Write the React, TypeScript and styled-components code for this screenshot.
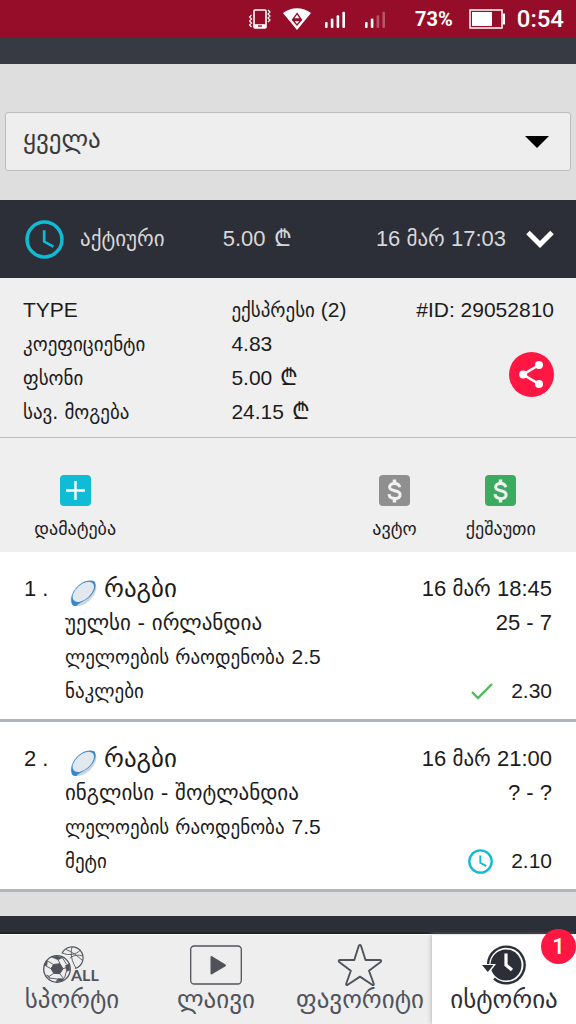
import React from "react";
import styled, { createGlobalStyle } from "styled-components";

const colors = {
  status: "#960d29",
  strip: "#373a42",
  header: "#2d2f38",
  page: "#dedede",
  panel: "#efefef",
  ink: "#1c1c1c",
  cyan: "#0fbcd6",
  green: "#3aab5f",
  grey: "#8f8f8f",
  red: "#ff1744",
  nav: "#50535b",
};

const GlobalStyle = createGlobalStyle`
  *, *::before, *::after { box-sizing: border-box; }
  body {
    margin: 0;
    background: ${colors.page};
    color: ${colors.ink};
    font-family: "Liberation Sans", "DejaVu Sans", sans-serif;
    font-size: 21px;
  }
  button, select { font: inherit; color: inherit; }
  button { border: 0; padding: 0; background: none; cursor: pointer; }
  svg { display: block; flex: none; }
`;

const Page = styled.div`
  display: flex;
  flex-direction: column;
  min-height: 100vh;
`;

const kaSizes = { small: 18, body: 19, medium: 21, lari: 23, large: 25 };

const Ka = styled.span<{ $size?: keyof typeof kaSizes }>`
  font-family: "DejaVu Sans", sans-serif;
  font-size: ${(p) => kaSizes[p.$size ?? "body"]}px;
`;

const LariSign = styled(Ka)`
  margin-left: 2px;
  line-height: 1;
`;

const StatusBar = styled.header`
  display: flex;
  align-items: center;
  justify-content: flex-end;
  height: 38px;
  padding: 0 12px;
  background: ${colors.status};
  color: #fff;
  font-family: Roboto, sans-serif;
`;

const StatusIcons = styled.div`
  display: flex;
  align-items: center;
  gap: 12px;
  margin-right: 30px;
`;

const Signals = styled.div`
  display: flex;
  gap: 20px;
  margin-left: 2px;
`;

const Percent = styled.span`
  margin-right: 16px;
  font-size: 20px;
  font-weight: 700;
`;

const Clock = styled.time`
  margin-left: 12px;
  font-size: 24px;
  font-weight: 500;
`;

const Strip = styled.div`
  height: 26px;
  background: ${colors.strip};
`;

const FilterArea = styled.div`
  padding: 48px 5px 29px;
`;

const SelectBox = styled.div`
  display: grid;
  align-items: center;
  > * { grid-area: 1 / 1; }
  > svg { justify-self: end; margin-right: 22px; pointer-events: none; }
`;

const Select = styled.select`
  appearance: none;
  width: 100%;
  height: 59px;
  padding: 0 17px 4px;
  border: 1px solid #bdbdbd;
  border-radius: 3px;
  background: #eee;
  color: #3a3a3a;
  font-family: "DejaVu Sans", sans-serif;
  font-size: 25px;
`;

const TicketHeader = styled.button`
  display: flex;
  align-items: center;
  width: 100%;
  height: 78px;
  padding: 0 22px 0 25px;
  background: ${colors.header};
  color: #d8d8d8;
  font-size: 22px;
  line-height: 34px;
  text-align: left;
`;

const TicketStatus = styled.span`
  width: 30%;
  padding-left: 16px;
`;

const TicketDate = styled.span`
  margin-left: auto;
  margin-right: 20px;
`;

const Details = styled.section`
  display: flex;
  justify-content: space-between;
  padding: 15px 22px 8px 23px;
  border-bottom: 1px solid #bcbcbc;
  background: ${colors.panel};
  line-height: 34px;
`;

const DetailList = styled.dl`
  flex: 1;
  margin: 0;
`;

const DetailRow = styled.div`
  display: flex;
  height: 34px;
`;

const DetailLabel = styled.dt`
  flex: 0 0 53%;
`;

const DetailValue = styled.dd`
  margin: 0;
  white-space: nowrap;
`;

const DetailSide = styled.div`
  display: flex;
  flex-direction: column;
  align-items: flex-end;
  gap: 25px;
`;

const ShareButton = styled.button`
  display: grid;
  place-items: center;
  width: 45px;
  height: 45px;
  border-radius: 50%;
  background: ${colors.red};
`;

const Actions = styled.div`
  display: flex;
  padding: 37px 22px 9px;
  background: ${colors.panel};
`;

const Action = styled.button`
  display: flex;
  flex-direction: column;
  align-items: center;
  gap: 9px;
  width: 20%;
  line-height: 28px;
  &:first-child { margin-right: auto; }
`;

const ActionIcon = styled.span<{ $color: string }>`
  display: grid;
  place-items: center;
  width: 31px;
  height: 31px;
  border-radius: 4px;
  background: ${(p) => p.$color};
`;

const Matches = styled.ol`
  margin: 0;
  padding: 0;
  list-style: none;
`;

const Match = styled.li`
  display: flex;
  padding: 20px 24px 11px;
  border-bottom: 3px solid #b0b4be;
  background: #fff;
  line-height: 34px;
`;

const MatchIndex = styled.span`
  width: 41px;
  font-size: 22px;
`;

const MatchInfo = styled.div`
  flex: 1;
`;

const Line = styled.div<{ $end?: boolean }>`
  display: flex;
  align-items: center;
  justify-content: ${(p) => (p.$end ? "flex-end" : "flex-start")};
  gap: 7px;
  height: 34px;
  white-space: pre;
`;

const SportLine = styled(Line)`
  padding-left: 5px;
  > svg { margin-top: 8px; }
`;

const MatchResult = styled.div`
  display: flex;
  flex-direction: column;
  font-size: 22px;
`;

const Odds = styled(Line)`
  gap: 18px;
  margin-top: auto;
  font-size: 21px;
`;

const Footer = styled.footer`
  margin-top: auto;
  padding-top: 18px;
  background: linear-gradient(${colors.header} 0 16px, #17181d 18px);
`;

const Nav = styled.nav`
  display: grid;
  grid-template-columns: repeat(4, 1fr);
  border-top: 1px solid #fff;
  background: #eee;
`;

const Tab = styled.a<{ $active?: boolean }>`
  position: relative;
  display: flex;
  flex-direction: column;
  align-items: center;
  height: 89px;
  padding-top: 9px;
  color: ${(p) => (p.$active ? colors.header : colors.nav)};
  background: ${(p) => (p.$active ? "#fff" : "transparent")};
  box-shadow: ${(p) => (p.$active ? "-1px 0 4px #bbb" : "none")};
  text-decoration: none;
  line-height: 28px;
  white-space: nowrap;
`;

const TabIcon = styled.span`
  display: grid;
  place-items: center;
  height: 42px;
`;

const Badge = styled.span`
  position: absolute;
  top: -6px;
  right: 0;
  width: 35px;
  height: 35px;
  border-radius: 50%;
  background: ${colors.red};
  color: #fff;
  font: 500 22px/35px Roboto, sans-serif;
  text-align: center;
`;

const VibrateIcon = () => (
  <svg width="22" height="20" viewBox="0 0 22 20" fill="none" stroke="#fff">
    <rect x="5" y="1" width="12" height="18" rx="1" strokeWidth="1.6" />
    <path d="M5 17h12" strokeWidth="3.600" />
    <path d="M9 17h4" stroke={colors.status} strokeWidth="1.4" />
    <path d="M2.5 6l-2 2 2 2-2 2 2 2-2 2 2 2M19 1l2 2-2 2 2 2-2 2 2 2-2 2" strokeWidth="1.2" />
  </svg>
);

const WifiIcon = () => (
  <svg width="28" height="22" viewBox="0 0 28 22">
    <path d="M0 5C8-1.500 20-1.500 28 5L14 22z" fill="#fff" />
    <path d="M14 5.500l4 5.500h-8zM10 12.500h8L14 17z" fill="none" stroke={colors.status} strokeWidth="1.3" />
  </svg>
);

const SignalIcon = ({ level }: { level: number }) => (
  <svg width="20" height="17" viewBox="0 0 20 17" fill="#fff">
    {[0, 1, 2, 3].map((i) => (
      <rect
        key={i}
        x={i * 5.8}
        y={11 - i * 3.4}
        width="2.6"
        height={6 + i * 3.4}
        rx="1"
        opacity={i < level ? 1 : 0.3}
      />
    ))}
  </svg>
);

const BatteryIcon = () => (
  <svg width="36" height="20" viewBox="0 0 36 20" fill="none" stroke="#fff">
    <rect x="1" y="1" width="32" height="18" strokeWidth="1.5" />
    <path d="M33.500 5.500h1.500v9h-1.500" strokeWidth="2" />
    <path d="M3 3h20v14H3z" fill="#fff" stroke="none" />
  </svg>
);

const ClockIcon = ({ size, stroke }: { size: number; stroke: number }) => (
  <svg width={size} height={size} viewBox="0 0 38 38" fill="none" stroke={colors.cyan} strokeWidth={stroke}>
    <circle cx="19" cy="19" r="17" />
    <path d="M18.700 10v11l9 5" strokeWidth={stroke - 0.8} />
  </svg>
);

const RugbyIcon = () => (
  <svg width="27" height="27" viewBox="0 0 27 27">
    <ellipse cx="13.500" cy="13.500" rx="15.500" ry="9.300" transform="rotate(-44 13.500 13.500)" fill="#c9d5e2" />
    <path d="M2.500 25C-.5 20 2 11 9 5c5-4.300 12-5.500 15.500-3.500 2.500 3.500.5 10-4.500 15S9 22.500 6.500 25.800c-1.500.4-3 .2-4-.8z" fill="#3b88c8" />
    <ellipse cx="13.300" cy="11.800" rx="12.800" ry="7.300" transform="rotate(-42 13.300 11.800)" fill="#e1e8ee" />
  </svg>
);

const ShareIcon = () => (
  <svg width="25" height="27" viewBox="0 0 25 27" fill="#fff">
    <path d="M20 4L4 13.500 20 23" fill="none" stroke="#fff" strokeWidth="2.600" />
    <circle cx="20" cy="4" r="4" />
    <circle cx="4.200" cy="13.500" r="4" />
    <circle cx="20" cy="23" r="4" />
  </svg>
);

const DollarIcon = () => (
  <svg width="15" height="24" viewBox="0 0 15 24" fill="none" stroke="#f1f1f1" strokeWidth="3">
    <path d="M7.500.5v4M7.500 19.500v4" strokeWidth="3.500" />
    <path d="M12.800 8.200C12.300 5.800 10.500 4.500 7.600 4.500c-3 0-5 1.400-5 3.600 0 5.200 10.500 2.200 10.500 7.600 0 2.400-2.300 3.800-5.300 3.800-3.400 0-5.600-1.500-5.800-4.300" />
  </svg>
);

const SportsIcon = () => (
  <svg width="60" height="40" viewBox="0 0 60 40" fill="none" stroke="currentColor">
    <path d="M20 8.500A11 11 0 1 1 33 23.500" strokeWidth="1.200" />
    <path d="M20.500 8c6 3 14 1.500 18-3M30 2c-2 7 0 15 4 21M24 4.500c6 2 12 7 16.500 11M28 13c4-3 8-3.500 13-2" strokeWidth=".9" />
    <circle cx="15" cy="24" r="13.300" fill="#eee" strokeWidth="1.300" />
    <path d="M11.500 19.500l6.500-.8 3 5-3.200 5-6-.4-2.800-4.600z" fill="currentColor" />
    <path d="M9.500 12l5-1 6 1.800-4.500 2zM23.500 20.500l4-2v7l-3 .8zM14 36.800l2-3.300 6 .3-2 2.200zM2.200 20.500l2-5 1.300.5-.8 5zM4.500 30l2 .8 1.500 3z" fill="currentColor" strokeWidth=".5" />
    <path d="M11.500 19.500l-6-3.500M18 18.700l-2-4M21 23.700l3-1M17.800 28.700l4 5M11.800 28.300L7 31.500M9 23.700L4 21M20.500 12.800l4 6.500M7.500 33l8 1M24.500 26l-2 7" strokeWidth=".9" />
    <text x="29" y="36" fill="currentColor" stroke="none" fontFamily="Lato, sans-serif" fontWeight="700" fontSize="16">
      ALL
    </text>
  </svg>
);

const LiveIcon = () => (
  <svg width="52" height="40" viewBox="0 0 52 40" fill="none" stroke="currentColor">
    <rect x=".7" y="1" width="50.600" height="38" rx="3.500" strokeWidth="1.300" />
    <path d="M21.500 12v16.500L35 20.300z" fill="currentColor" strokeWidth="2" strokeLinejoin="round" />
  </svg>
);

const StarIcon = () => (
  <svg width="46" height="42" viewBox="0 0 46 42" fill="none" stroke="currentColor" strokeWidth="1.900" strokeLinejoin="round">
    <path d="M21.800 1.800q1.200-1.600 2.200 0L28.500 16H43q2 .5.6 2L32 26.800 36.800 40q.2 1.600-1.300 1L23 32.600 10.400 41q-1.500.4-1.200-1.200L13.800 26.800 2.200 18Q1 16.500 2.800 16h14.500z" />
  </svg>
);

const HistoryIcon = () => (
  <svg width="44" height="40" viewBox="0 0 44 40" fill="none" stroke="currentColor">
    <path d="M6 20A18.300 18.300 0 1 1 12 33.500" strokeWidth="2.400" />
    <circle cx="24" cy="20" r="15.500" fill="currentColor" stroke="none" />
    <path d="M-1 19h15l-8 10.500z" fill="#fff" stroke="none" />
    <path d="M0 20h11.500L5.800 27z" fill="currentColor" stroke="none" />
    <path d="M24 8.500V20l6 5" stroke="#fff" strokeWidth="3.200" />
  </svg>
);

const Lari = () => <LariSign $size="lari">₾</LariSign>;

const details = [
  { label: "TYPE", value: <><Ka>ექსპრესი</Ka> (2)</> },
  { label: <Ka>კოეფიციენტი</Ka>, value: "4.83" },
  { label: <Ka>ფსონი</Ka>, value: <>5.00 <Lari /></> },
  { label: <Ka>სავ. მოგება</Ka>, value: <>24.15 <Lari /></> },
];

const matches = [
  { teams: "უელსი - ირლანდია", total: "2.5", pick: "ნაკლები", time: "18:45", score: "25 - 7", odds: "2.30", won: true },
  { teams: "ინგლისი - შოტლანდია", total: "7.5", pick: "მეტი", time: "21:00", score: "? - ?", odds: "2.10", won: false },
];

const tabs = [
  { label: "სპორტი", icon: <SportsIcon /> },
  { label: "ლაივი", icon: <LiveIcon /> },
  { label: "ფავორიტი", icon: <StarIcon /> },
  { label: "ისტორია", icon: <HistoryIcon />, active: true, badge: 1 },
];

export default function App() {
  return (
    <Page>
      <GlobalStyle />
      <StatusBar>
        <StatusIcons>
          <VibrateIcon />
          <WifiIcon />
          <Signals>
            <SignalIcon level={4} />
            <SignalIcon level={2} />
          </Signals>
        </StatusIcons>
        <Percent>73%</Percent>
        <BatteryIcon />
        <Clock>0:54</Clock>
      </StatusBar>
      <Strip />
      <main>
        <FilterArea>
          <SelectBox>
            <Select aria-label="ფილტრი">
              <option>ყველა</option>
            </Select>
            <svg width="24" height="12" viewBox="0 0 24 12">
              <path d="M0 0h24L12 12z" />
            </svg>
          </SelectBox>
        </FilterArea>

        <TicketHeader aria-expanded="true">
          <ClockIcon size={39} stroke={3.4} />
          <TicketStatus><Ka $size="medium">აქტიური</Ka></TicketStatus>
          <span>5.00 <Lari /></span>
          <TicketDate>16 <Ka $size="medium">მარ</Ka> 17:03</TicketDate>
          <svg width="28" height="18" viewBox="0 0 28 18" fill="none" stroke="#fff" strokeWidth="5">
            <path d="M2 2.500l12 12 12-12" />
          </svg>
        </TicketHeader>

        <Details>
          <DetailList>
            {details.map((d, i) => (
              <DetailRow key={i}>
                <DetailLabel>{d.label}</DetailLabel>
                <DetailValue>{d.value}</DetailValue>
              </DetailRow>
            ))}
          </DetailList>
          <DetailSide>
            <span>#ID: 29052810</span>
            <ShareButton aria-label="გაზიარება">
              <ShareIcon />
            </ShareButton>
          </DetailSide>
        </Details>

        <Actions>
          <Action>
            <ActionIcon $color={colors.cyan}>
              <svg width="19" height="19" viewBox="0 0 19 19" stroke="#fff" strokeWidth="2.400">
                <path d="M9.500 0v19M0 9.500h19" />
              </svg>
            </ActionIcon>
            <Ka $size="small">დამატება</Ka>
          </Action>
          <Action>
            <ActionIcon $color={colors.grey}><DollarIcon /></ActionIcon>
            <Ka $size="small">ავტო</Ka>
          </Action>
          <Action>
            <ActionIcon $color={colors.green}><DollarIcon /></ActionIcon>
            <Ka $size="small">ქეშაუთი</Ka>
          </Action>
        </Actions>

        <Matches>
          {matches.map((m, i) => (
            <Match key={m.teams}>
              <MatchIndex>{i + 1} .</MatchIndex>
              <MatchInfo>
                <SportLine><RugbyIcon /><Ka $size="large">რაგბი</Ka></SportLine>
                <Line><Ka $size="medium">{m.teams}</Ka></Line>
                <Line><Ka>ლელოების რაოდენობა</Ka>{m.total}</Line>
                <Line><Ka>{m.pick}</Ka></Line>
              </MatchInfo>
              <MatchResult>
                <Line $end><span>16 <Ka $size="medium">მარ</Ka> {m.time}</span></Line>
                <Line $end>{m.score}</Line>
                <Odds $end>
                  {m.won ? (
                    <svg width="22" height="17" viewBox="0 0 22 17" fill="none" stroke="#52b95a" strokeWidth="2.400">
                      <path d="M1 9l6 6L21 1" />
                    </svg>
                  ) : (
                    <ClockIcon size={25} stroke={3.6} />
                  )}
                  <span>{m.odds}</span>
                </Odds>
              </MatchResult>
            </Match>
          ))}
        </Matches>
      </main>

      <Footer>
        <Nav>
          {tabs.map((t) => (
            <Tab key={t.label} href="#" $active={t.active} aria-current={t.active ? "page" : undefined}>
              <TabIcon>{t.icon}</TabIcon>
              <Ka $size="large">{t.label}</Ka>
              {t.badge && <Badge>{t.badge}</Badge>}
            </Tab>
          ))}
        </Nav>
      </Footer>
    </Page>
  );
}
